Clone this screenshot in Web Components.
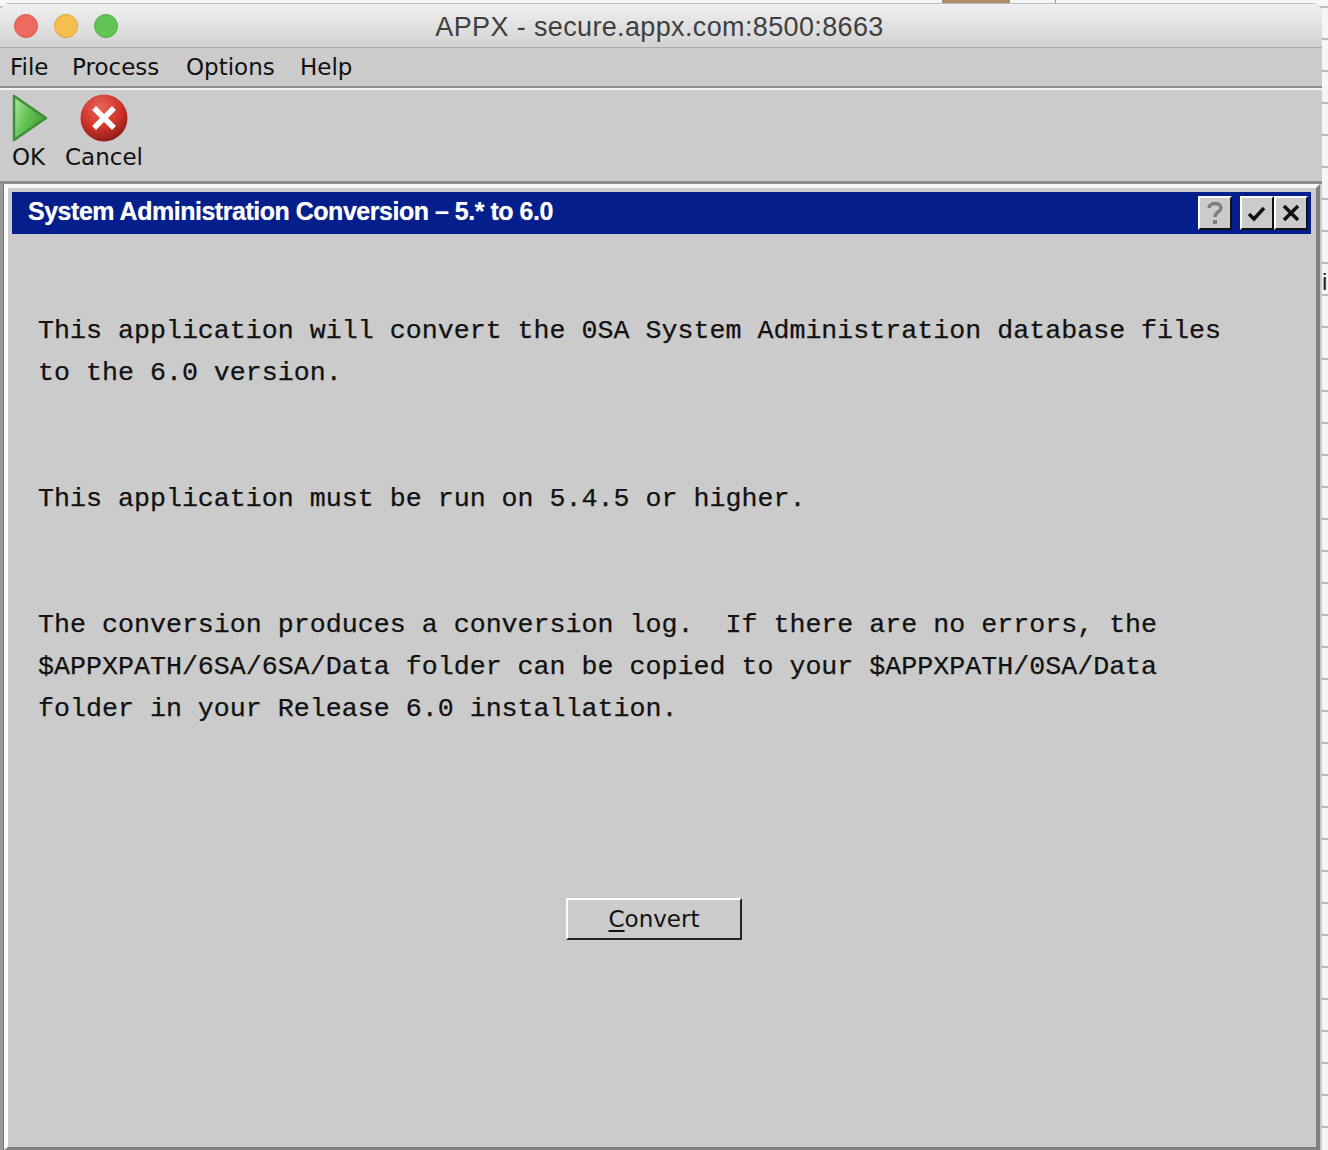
<!DOCTYPE html>
<html>
<head>
<meta charset="utf-8">
<title>APPX</title>
<style>
  html, body { margin: 0; padding: 0; }
  body {
    width: 1328px;
    height: 1150px;
    overflow: hidden;
    background-color: #f6f6f6;
    background-image:
      repeating-linear-gradient(to bottom, transparent 0, transparent 6px, #bbb 6px, #bbb 8px, transparent 8px, transparent 32px);
    position: relative;
  }
</style>
</head>
<body>
<appx-backdrop></appx-backdrop>
<appx-window heading="APPX - secure.appx.com:8500:8663">
  <appx-menubar></appx-menubar>
  <appx-toolbar></appx-toolbar>
  <appx-panel heading="System Administration Conversion – 5.* to 6.0">
    <p>This application will convert the 0SA System Administration database files<br>to the 6.0 version.</p>
    <p>This application must be run on 5.4.5 or higher.</p>
    <p>The conversion produces a conversion log.  If there are no errors, the<br>$APPXPATH/6SA/6SA/Data folder can be copied to your $APPXPATH/0SA/Data<br>folder in your Release 6.0 installation.</p>
    <appx-button slot="actions" label="Convert"></appx-button>
  </appx-panel>
</appx-window>

<script>
// what shows behind the window, the stray tab at the top and a cut off letter
class AppxBackdrop extends HTMLElement {
  constructor() {
    super();
    this.attachShadow({ mode: "open" });
    this.shadowRoot.innerHTML = `
      <style>
        :host { display: block; }
        .tab { position: absolute; left: 942px; top: 0; width: 68px; height: 4px; background: #b08d68; }
        .line { position: absolute; left: 1055px; top: 0; width: 1px; height: 4px; background: #999; }
        .cut { position: absolute; left: 1322px; top: 268px; font: 24px "Liberation Sans", sans-serif; color: #222; width: 6px; overflow: hidden; }
      </style>
      <div class="tab"></div>
      <div class="line"></div>
      <div class="cut">i</div>
    `;
  }
}
customElements.define("appx-backdrop", AppxBackdrop);

const windowTemplate = document.createElement("template");
windowTemplate.innerHTML = /*html*/ `
  <style>
    :host {
      display: block;
      position: absolute;
      left: 0;
      top: 3px;
      width: 1322px;
      height: 1147px;
      background: #cbcbcb;
      border-radius: 10px 10px 0 0;
      overflow: hidden;
    }
    .frame { display: flex; flex-direction: column; height: 100%; }
    .title {
      flex: none;
      height: 44px;
      padding: 3px 3px 0 0;
      box-sizing: border-box;
      display: flex;
      align-items: center;
      justify-content: center;
      position: relative;
      background: linear-gradient(#f0f0f0, #d2d2d2);
      border-top: 1px solid #bcbcbc;
      font: 27px "Liberation Sans", sans-serif;
      letter-spacing: 0.36px;
      color: #3f3f3f;
    }
    .lights { position: absolute; left: 14px; top: 10px; display: flex; gap: 16px; }
    .light { width: 24px; height: 24px; border-radius: 50%; box-sizing: border-box; }
    .red { background: #ee6a5f; border: 1px solid #d55a4f; }
    .yellow { background: #f6be4f; border: 1px solid #dca63b; }
    .green { background: #61c455; border: 1px solid #4fae44; }
    .rule { flex: none; height: 1px; background: #ababab; }
  </style>
  <div class="frame">
    <div class="title">
      <div class="lights">
        <div class="light red"></div>
        <div class="light yellow"></div>
        <div class="light green"></div>
      </div>
      <span class="heading"></span>
    </div>
    <div class="rule"></div>
    <slot></slot>
  </div>
`;

class AppxWindow extends HTMLElement {
  constructor() {
    super();
    this.attachShadow({ mode: "open" });
    this.shadowRoot.appendChild(windowTemplate.content.cloneNode(true));
    this.shadowRoot.querySelector(".heading").textContent = this.getAttribute("heading");
  }
}
customElements.define("appx-window", AppxWindow);

class AppxMenubar extends HTMLElement {
  constructor() {
    super();
    this.attachShadow({ mode: "open" });
    this.shadowRoot.innerHTML = `
      <style>
        :host {
          display: grid;
          grid-template-columns: 62px 114px 114px auto;
          flex: none;
          box-sizing: border-box;
          height: 42px;
          padding: 0 0 3px 10px;
          align-items: center;
          background: #cbcbcb;
          border-bottom: 2px solid #f2f2f2;
          box-shadow: inset 0 -2px 0 #8e8e8e;
          font: 23px "DejaVu Sans", sans-serif;
          color: #111;
        }
      </style>
      <span>File</span><span>Process</span><span>Options</span><span>Help</span>
    `;
  }
}
customElements.define("appx-menubar", AppxMenubar);

class AppxToolbar extends HTMLElement {
  constructor() {
    super();
    this.attachShadow({ mode: "open" });
    this.shadowRoot.innerHTML = `
      <style>
        :host {
          display: flex;
          flex: none;
          box-sizing: border-box;
          height: 94px;
          padding: 4px 0 0 12px;
          gap: 20px;
          align-items: flex-start;
          background: #cbcbcb;
          border-bottom: 3px solid #8e8e8e;
          font: 23px "DejaVu Sans", sans-serif;
          color: #111;
        }
        .tool { display: flex; flex-direction: column; }
        .ok { width: 34px; align-items: flex-start; }
        .cancel { width: 76px; align-items: center; }
        svg { display: block; }
        span { line-height: 28px; margin-top: 1px; white-space: nowrap; }
      </style>
      <div class="tool ok">
        <svg width="36" height="48" viewBox="0 0 36 48">
          <defs>
            <linearGradient id="play" x1="0" y1="0.1" x2="1" y2="0.6">
              <stop offset="0" stop-color="#a9e59c"/>
              <stop offset="0.5" stop-color="#62c052"/>
              <stop offset="1" stop-color="#3f9c38"/>
            </linearGradient>
          </defs>
          <path d="M2 2 L34 24 L2 46 Z" fill="url(#play)" stroke="#3d8f38" stroke-width="2.5" stroke-linejoin="round"/>
        </svg>
        <span>OK</span>
      </div>
      <div class="tool cancel">
        <svg width="48" height="48" viewBox="0 0 48 48">
          <defs>
            <radialGradient id="stop" cx="0.42" cy="0.28" r="0.8">
              <stop offset="0" stop-color="#e8665c"/>
              <stop offset="0.55" stop-color="#cf3329"/>
              <stop offset="1" stop-color="#7f1712"/>
            </radialGradient>
          </defs>
          <circle cx="24" cy="24" r="23.5" fill="url(#stop)"/>
          <path d="M16 16 L32 32 M32 16 L16 32" stroke="#fff" stroke-width="5.5" stroke-linecap="square"/>
        </svg>
        <span>Cancel</span>
      </div>
    `;
  }
}
customElements.define("appx-toolbar", AppxToolbar);

const panelTemplate = document.createElement("template");
panelTemplate.innerHTML = /*html*/ `
  <style>
    :host {
      display: block;
      flex: 1;
      min-height: 0;
      box-sizing: border-box;
      margin: 0 2px 0 4px;
      padding: 4px 5px 0 4px;
      border-left: 4px solid #fff;
      border-top: 4px solid #f6f6f6;
      border-right: 4px solid #808080;
      border-bottom: 3px solid #808080;
      background: #cbcbcb;
      box-shadow: -1px 0 0 #777, -4px 0 0 #999;
    }
    .bar {
      height: 42px;
      box-sizing: border-box;
      display: flex;
      align-items: center;
      padding: 0 3px 0 16px;
      background: #041e8b;
      color: #fff;
      font: bold 25px "Liberation Sans", sans-serif;
      letter-spacing: -0.48px;
      text-shadow: 0 0 1px rgba(255, 255, 255, 0.6);
    }
    .label { flex: 1; position: relative; top: -2px; }
    .btns { display: flex; }
    .btn {
      box-sizing: border-box;
      width: 34px;
      height: 34px;
      background: #cbcbcb;
      border-left: 2px solid #fff;
      border-top: 2px solid #fff;
      border-right: 2px solid #111;
      border-bottom: 2px solid #111;
      display: flex;
      align-items: center;
      justify-content: center;
    }
    .help { margin-right: 8px; }
    .body {
      padding: 76px 0 0 26px;
      font: 26.65px/42px "Liberation Mono", monospace;
      color: #111;
      -webkit-text-stroke: 0.25px #111;
    }
    ::slotted(p) { margin: 0 0 84px; white-space: pre; }
    ::slotted(p:last-of-type) { margin-bottom: 0; }
    .actions { display: flex; justify-content: center; margin-top: 168px; padding-right: 15px; }
  </style>
  <div class="bar">
    <span class="label"></span>
    <div class="btns">
      <div class="btn help">
        <svg width="22" height="26" viewBox="0 0 22 26"><path d="M5 8 C5 2 17 2 17 8 C17 12 11 12 11 17" fill="none" stroke="#7d7d7d" stroke-width="3.5"/><rect x="9" y="20" width="4" height="4" fill="#7d7d7d"/></svg>
      </div>
      <div class="btn">
        <svg width="22" height="22" viewBox="0 0 22 22"><path d="M3 12 L8 17 L18 6" fill="none" stroke="#111" stroke-width="3.5"/></svg>
      </div>
      <div class="btn">
        <svg width="22" height="22" viewBox="0 0 22 22"><path d="M4 4 L18 18 M18 4 L4 18" fill="none" stroke="#111" stroke-width="3.5"/></svg>
      </div>
    </div>
  </div>
  <div class="body"><slot></slot></div>
  <div class="actions"><slot name="actions"></slot></div>
`;

class AppxPanel extends HTMLElement {
  constructor() {
    super();
    this.attachShadow({ mode: "open" });
    this.shadowRoot.appendChild(panelTemplate.content.cloneNode(true));
    this.shadowRoot.querySelector(".label").textContent = this.getAttribute("heading");
  }
}
customElements.define("appx-panel", AppxPanel);

class AppxButton extends HTMLElement {
  constructor() {
    super();
    this.attachShadow({ mode: "open" });
    const label = this.getAttribute("label");
    this.shadowRoot.innerHTML = `
      <style>
        :host {
          display: flex;
          box-sizing: border-box;
          width: 176px;
          height: 42px;
          align-items: center;
          justify-content: center;
          background: #cbcbcb;
          border-left: 2px solid #fff;
          border-top: 2px solid #fff;
          border-right: 2px solid #222;
          border-bottom: 2px solid #222;
          font: 23px "DejaVu Sans", sans-serif;
          color: #111;
        }
        u { text-underline-offset: 3px; }
      </style>
      <span><u>${label[0]}</u>${label.slice(1)}</span>
    `;
  }
}
customElements.define("appx-button", AppxButton);
</script>
</body>
</html>
